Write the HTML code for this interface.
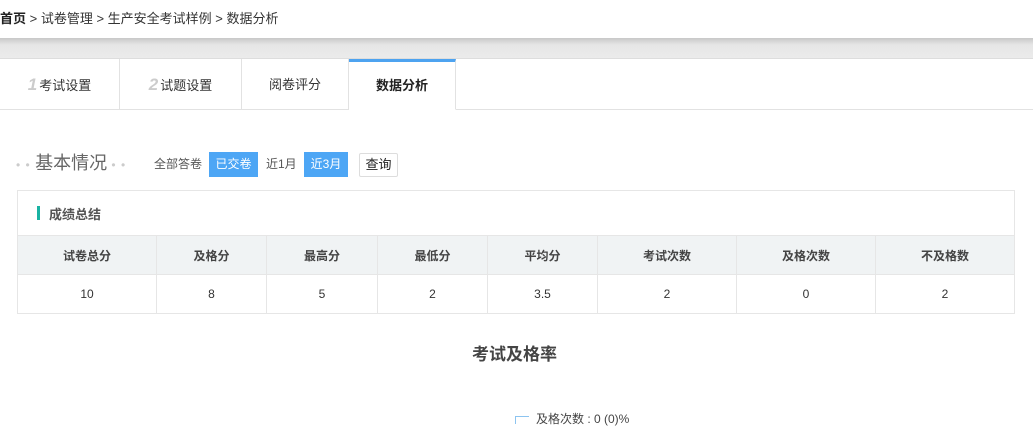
<!DOCTYPE html>
<html><head><meta charset="utf-8"><style>
*{margin:0;padding:0;box-sizing:border-box}
body{width:1033px;height:424px;overflow:hidden;background:#fff;font-family:"Liberation Sans","Noto Sans CJK SC",sans-serif;color:#333;position:relative}
.a{position:absolute}
.bc{left:0;top:8px;font-size:13px;color:#333;white-space:nowrap}
.band{left:0;top:38px;width:1033px;height:21px;background:linear-gradient(#c8c8c8,#e6e6e6 35%,#ebebeb);border-bottom:1px solid #ddd}
.tab{top:59px;height:51px;border-right:1px solid #e2e2e2;border-bottom:1px solid #e2e2e2;font-size:13px;line-height:51px;text-align:center;color:#333}
.tab i{font-style:italic;font-weight:bold;color:#ccc;font-size:17px;margin-right:2px}
.btn{top:152px;height:25px;font-size:12px;line-height:25px;text-align:center}
table{border-collapse:collapse;position:absolute;left:17px;top:235px;width:998px;font-size:12px}
td,th{border:1px solid #e6e6e6;text-align:center;height:39px}
th{background:#f0f3f4;font-weight:bold;color:#444}
</style></head><body>
<div class="a bc"><b style="color:#222">首页</b> &gt; 试卷管理 &gt; 生产安全考试样例 &gt; 数据分析</div>
<div class="a band"></div>
<div class="a" style="left:0;top:109px;width:1033px;height:1px;background:#e2e2e2"></div>
<div class="a tab" style="left:0;width:120px"><i>1</i>考试设置</div>
<div class="a tab" style="left:120px;width:122px"><i>2</i>试题设置</div>
<div class="a tab" style="left:242px;width:107px">阅卷评分</div>
<div class="a tab" style="left:349px;width:107px;border-bottom-color:#fff;border-top:3px solid #4da3f0;line-height:48px;font-weight:bold;color:#222">数据分析</div>
<div class="a" style="left:16px;top:151px;font-size:18px;color:#666;line-height:24px"><span style="color:#ccc;font-size:12px;letter-spacing:1px">• • </span>基本情况<span style="color:#ccc;font-size:12px;letter-spacing:1px"> • •</span></div>
<div class="a btn" style="left:154px;color:#555">全部答卷</div>
<div class="a btn" style="left:209px;width:49px;background:#4da6f5;color:#fff">已交卷</div>
<div class="a btn" style="left:266px;color:#555">近1月</div>
<div class="a btn" style="left:304px;width:44px;background:#4da6f5;color:#fff">近3月</div>
<div class="a btn" style="left:359px;width:39px;top:153px;height:24px;border:1px solid #ddd;border-radius:2px;font-size:13px;line-height:22px;color:#222">查询</div>
<div class="a" style="left:17px;top:190px;width:998px;height:46px;border:1px solid #e6e6e6;border-bottom:none"></div>
<div class="a" style="left:37px;top:206px;width:3px;height:14px;background:#19b3a3"></div>
<div class="a" style="left:49px;top:204px;font-size:13px;font-weight:bold;color:#555">成绩总结</div>
<table><tr><th style="width:139px">试卷总分</th><th style="width:110px">及格分</th><th style="width:111px">最高分</th><th style="width:110px">最低分</th><th style="width:110px">平均分</th><th style="width:139px">考试次数</th><th style="width:139px">及格次数</th><th>不及格数</th></tr>
<tr><td>10</td><td>8</td><td>5</td><td>2</td><td>3.5</td><td>2</td><td>0</td><td>2</td></tr></table>
<div class="a" style="left:472px;top:340px;font-size:17px;font-weight:bold;color:#444">考试及格率</div>
<div class="a" style="left:515px;top:416px;width:14px;height:8px;border-top:1px solid #8cc4f0;border-left:1px solid #8cc4f0"></div>
<div class="a" style="left:536px;top:410px;font-size:12px;color:#444">及格次数 : 0 (0)%</div>
</body></html>
